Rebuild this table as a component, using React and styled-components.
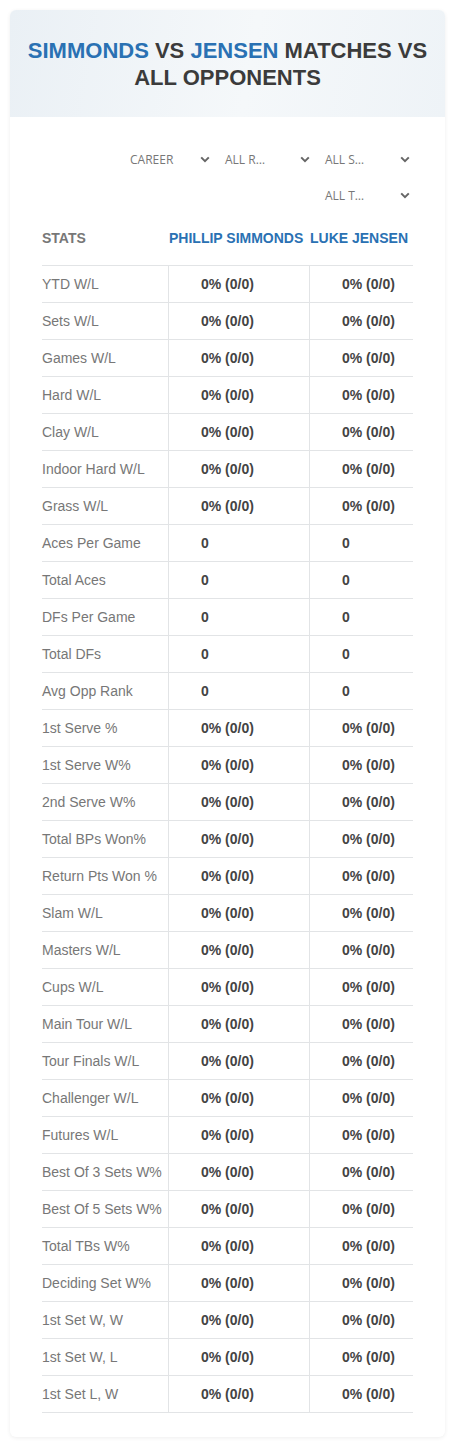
import React from 'react'
import styled, { createGlobalStyle } from 'styled-components'

const GlobalStyle = createGlobalStyle`
    body {
        margin: 0;
        background: #ffffff;
        font-family: "Liberation Sans", Arial, sans-serif;
    }
`;

const Card = styled.div`
    margin: 10px 10px 11px;
    background: #fff;
    border-radius: 6px;
    box-shadow: 0 1px 4px rgba(0, 0, 0, 0.07);
    padding-bottom: 24px;
`;

const Header = styled.div`
    height: 107px;
    border-radius: 6px 6px 0 0;
    background: linear-gradient(100deg, #eaf0f5 0%, #f5f8fa 55%, #eef3f7 100%);
    display: flex;
    align-items: center;
    justify-content: center;
    text-align: center;
    padding: 0 14px;
`;

const Title = styled.h1`
    margin: 0;
    font-size: 22px;
    line-height: 27px;
    font-weight: 700;
    text-transform: uppercase;
    color: #3b3b3b;
`;

const Name = styled.span`
    color: #2a71b3;
`;

const Filters = styled.div`
    display: flex;
    flex-wrap: wrap;
    justify-content: flex-end;
    column-gap: 10px;
    row-gap: 8px;
    width: 290px;
    margin: 28px 32px 0 auto;
`;

const Select = styled.div`
    width: 90px;
    height: 28px;
    display: flex;
    align-items: center;
    justify-content: space-between;
    padding: 0 3px 0 ${p => (p.$first ? '7px' : '2px')};
    box-sizing: border-box;
    font-family: "Open Sans", sans-serif;
    font-size: 12px;
    color: #777;
`;

const Table = styled.div`
    margin: 21px 32px 0;
`;

const Row = styled.div`
    display: grid;
    grid-template-columns: 126px 141px 1fr;
    border-bottom: 1px solid #e2e4e6;
    height: ${p => (p.$head ? '35px' : '36px')};
    align-items: ${p => (p.$head ? 'start' : 'stretch')};
`;

const HeadCell = styled.div`
    font-size: 14px;
    font-weight: 700;
    text-transform: uppercase;
    color: ${p => (p.$blue ? '#2a71b3' : '#777')};
    padding-left: ${p => (p.$blue ? '1px' : '0')};
    line-height: 16px;
    white-space: nowrap;
`;

const Label = styled.div`
    display: flex;
    align-items: center;
    font-size: 14px;
    color: #777;
`;

const Value = styled.div`
    display: flex;
    align-items: center;
    font-size: 14px;
    font-weight: 700;
    color: #444;
    padding-left: 32px;
    border-left: 1px solid #e2e4e6;
`;

const Chevron = () => (
    <svg width="10" height="7" viewBox="0 0 10 7">
        <path d="M1.2 1.4 L5 5.2 L8.8 1.4" fill="none" stroke="#666" strokeWidth="2" />
    </svg>
);

const pct = '0% (0/0)';

const stats = [
    ['YTD W/L', pct], ['Sets W/L', pct], ['Games W/L', pct], ['Hard W/L', pct],
    ['Clay W/L', pct], ['Indoor Hard W/L', pct], ['Grass W/L', pct],
    ['Aces Per Game', '0'], ['Total Aces', '0'], ['DFs Per Game', '0'],
    ['Total DFs', '0'], ['Avg Opp Rank', '0'],
    ['1st Serve %', pct], ['1st Serve W%', pct], ['2nd Serve W%', pct],
    ['Total BPs Won%', pct], ['Return Pts Won %', pct], ['Slam W/L', pct],
    ['Masters W/L', pct], ['Cups W/L', pct], ['Main Tour W/L', pct],
    ['Tour Finals W/L', pct], ['Challenger W/L', pct], ['Futures W/L', pct],
    ['Best Of 3 Sets W%', pct], ['Best Of 5 Sets W%', pct], ['Total TBs W%', pct],
    ['Deciding Set W%', pct], ['1st Set W, W', pct], ['1st Set W, L', pct],
    ['1st Set L, W', pct],
];

const filters = ['CAREER', 'ALL R…', 'ALL S…', 'ALL T…'];

export default function App() {
    return (
        <>
            <GlobalStyle />
            <Card>
                <Header>
                    <Title>
                        <Name>Simmonds</Name> vs <Name>Jensen</Name> matches vs all opponents
                    </Title>
                </Header>
                <Filters>
                    {filters.map((f, i) => (
                        <Select key={f} $first={i === 0}>
                            <span>{f}</span>
                            <Chevron />
                        </Select>
                    ))}
                </Filters>
                <Table>
                    <Row $head>
                        <HeadCell>Stats</HeadCell>
                        <HeadCell $blue>Phillip Simmonds</HeadCell>
                        <HeadCell $blue>Luke Jensen</HeadCell>
                    </Row>
                    {stats.map(([label, v]) => (
                        <Row key={label}>
                            <Label>{label}</Label>
                            <Value>{v}</Value>
                            <Value>{v}</Value>
                        </Row>
                    ))}
                </Table>
            </Card>
        </>
    )
}
